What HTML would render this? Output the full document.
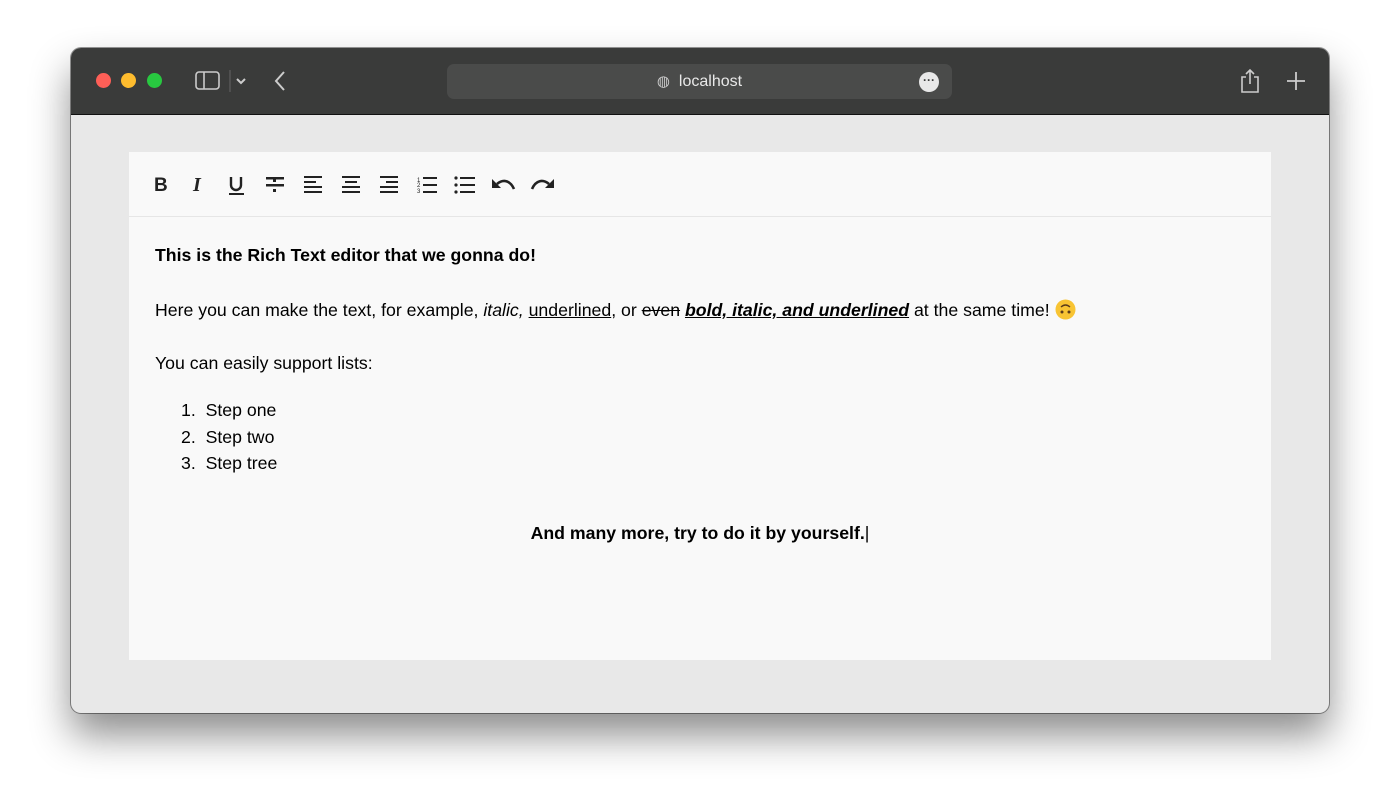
<!DOCTYPE html>
<html><head><meta charset="utf-8"><style>
body{margin:0;width:1400px;height:808px;background:#fff;font-family:"Liberation Sans",sans-serif;position:relative;overflow:hidden}
.win{position:absolute;left:71px;top:48px;width:1258px;height:665px;border-radius:10px;overflow:hidden;background:#e8e8e8;box-shadow:0 22px 40px rgba(0,0,0,.45),0 0 0 1px rgba(0,0,0,.4)}
.tb{position:absolute;left:0;top:0;width:100%;height:66px;background:#3a3b3a;border-bottom:1px solid #111}
.dot{position:absolute;top:25px;width:15px;height:15px;border-radius:50%}
.url{position:absolute;left:376px;top:16px;width:505px;height:35px;border-radius:7px;background:#4a4b4a;color:#e8e8e8;font-size:16px;line-height:35px;text-align:center}
.card{position:absolute;left:58px;top:104px;width:1142px;height:508px;background:#f9f9f9}
.tools{height:64px;border-bottom:1px solid #e6e6e6;position:relative}
.tools svg{position:absolute;top:22px}
.c{position:absolute;left:26px;font-size:17.7px;color:#000}
</style></head><body>
<div class="win">
<div class="tb">
<div class="dot" style="left:25px;background:#fe5f57"></div>
<div class="dot" style="left:50px;background:#febc2e"></div>
<div class="dot" style="left:76px;background:#28c840"></div>
<svg style="position:absolute;left:124px;top:22px" width="60" height="22" fill="none" stroke="#ccc" stroke-width="1.6"><rect x="1" y="2" width="23" height="17" rx="3"/><line x1="9" y1="2" x2="9" y2="19"/><line x1="35" y1="0" x2="35" y2="22" stroke="#555"/><path d="M42 9l4 4 4-4" stroke-width="2"/></svg>
<svg style="position:absolute;left:202px;top:22px" width="14" height="22" fill="none" stroke="#ccc" stroke-width="2"><path d="M11 2L3 11l8 9"/></svg>
<div class="url"><span style="font-size:15px;color:#ccc">◍</span>&nbsp; localhost</div>
<div style="position:absolute;left:848px;top:24px;width:20px;height:20px;border-radius:50%;background:#e8e8e8;color:#3a3b3a;font-size:12px;line-height:16px;text-align:center;font-weight:bold">···</div>
<svg style="position:absolute;left:1168px;top:20px" width="22" height="26" fill="none" stroke="#ccc" stroke-width="1.6"><path d="M7 9H3v15h16V9h-4M11 16V2M7 6l4-4 4 4"/></svg>
<svg style="position:absolute;left:1215px;top:23px" width="20" height="20" stroke="#ccc" stroke-width="1.8"><path d="M10 1v18M1 10h18"/></svg>
</div>
<div class="card">
<div class="tools">
<svg style="left:22px" width="420" height="22" fill="#222">
<text x="3" y="17" font-family="Liberation Sans" font-weight="bold" font-size="19">B</text>
<text x="42" y="17" font-family="Liberation Serif" font-weight="bold" font-style="italic" font-size="20">I</text>
<path d="M80 3v8a5 5 0 0 0 10 0V3" stroke="#222" stroke-width="2.4" fill="none"/><rect x="78" y="19" width="15" height="2"/>
<rect x="115" y="3" width="18" height="2.5"/><rect x="122" y="3" width="3" height="5"/><rect x="115" y="10" width="18" height="2.5"/><rect x="122" y="15" width="3" height="3"/>
<g><rect x="153" y="2" width="18" height="2"/><rect x="153" y="7" width="12" height="2"/><rect x="153" y="12" width="18" height="2"/><rect x="153" y="17" width="18" height="2"/></g>
<g><rect x="191" y="2" width="18" height="2"/><rect x="194" y="7" width="12" height="2"/><rect x="191" y="12" width="18" height="2"/><rect x="191" y="17" width="18" height="2"/></g>
<g><rect x="229" y="2" width="18" height="2"/><rect x="235" y="7" width="12" height="2"/><rect x="229" y="12" width="18" height="2"/><rect x="229" y="17" width="18" height="2"/></g>
<g><text x="266" y="8" font-size="6">1</text><text x="266" y="13" font-size="6">2</text><text x="266" y="19" font-size="6">3</text><rect x="272" y="3" width="14" height="2"/><rect x="272" y="10" width="14" height="2"/><rect x="272" y="17" width="14" height="2"/></g>
<g><circle cx="305" cy="4" r="1.6"/><circle cx="305" cy="11" r="1.6"/><circle cx="305" cy="18" r="1.6"/><rect x="309" y="3" width="15" height="2"/><rect x="309" y="10" width="15" height="2"/><rect x="309" y="17" width="15" height="2"/></g>
<path d="M346 10c6-5 13-4 17 5" stroke="#222" stroke-width="2.6" fill="none"/><path d="M341 5v9h9z"/>
<path d="M398 10c-6-5-13-4-17 5" stroke="#222" stroke-width="2.6" fill="none"/><path d="M403 5v9h-9z"/>
</svg>
</div>
<div class="c" style="top:93px;font-weight:bold">This is the Rich Text editor that we gonna do!</div>
<div class="c" style="top:147px">Here you can make the text, for example, <i>italic,</i> <u>underlined</u>, or <s>even</s> <b><i><u>bold, italic, and underlined</u></i></b> at the same time! <svg width="21" height="21" style="vertical-align:-4px"><circle cx="10.5" cy="10.5" r="10" fill="#f8c433"/><circle cx="7" cy="13" r="1.5" fill="#5a3b1a"/><circle cx="14" cy="13" r="1.5" fill="#5a3b1a"/><path d="M6 8q4.5-4 9 0" stroke="#5a3b1a" stroke-width="1.4" fill="none"/></svg></div>
<div class="c" style="top:201px">You can easily support lists:</div>
<div class="c" style="top:245px;left:52px;line-height:26.5px">1.&nbsp; Step one<br>2.&nbsp; Step two<br>3.&nbsp; Step tree</div>
<div class="c" style="top:371px;left:0;width:1142px;text-align:center;font-weight:bold">And many more, try to do it by yourself.<span style="font-weight:normal">|</span></div>
</div>
</div>
</body></html>
